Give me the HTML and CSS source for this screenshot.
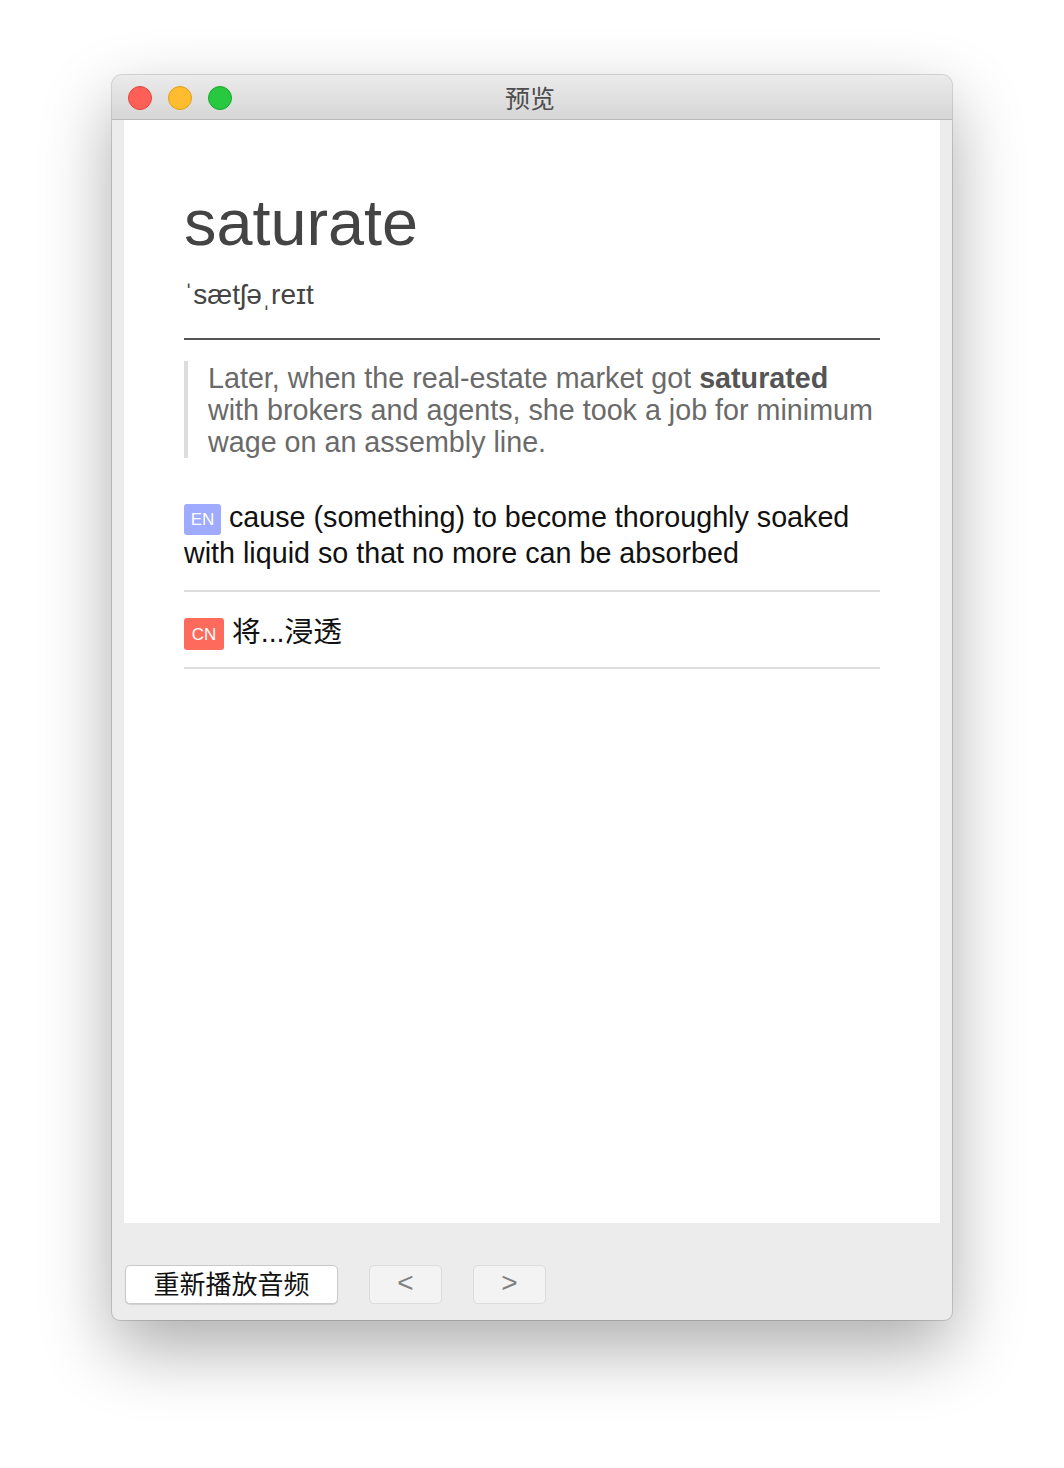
FILE: index.html
```html
<!DOCTYPE html>
<html lang="zh">
<head>
<meta charset="utf-8">
<title>预览</title>
<link rel="stylesheet" href="styles.css">
</head>
<body>
<div class="window">
  <div class="titlebar">
    <div class="lights">
      <span class="light red"></span>
      <span class="light yellow"></span>
      <span class="light green"></span>
    </div>
    <div class="title">预览</div>
  </div>
  <div class="main">
    <div class="content">
      <h1 class="word">saturate</h1>
      <div class="phonetic">ˈsætʃəˌreɪt</div>
      <hr class="rule-dark">
      <blockquote class="example">Later, when the real-estate market got <b>saturated</b> with brokers and agents, she took a job for minimum wage on an assembly line.</blockquote>
      <div class="def def-en"><span class="badge badge-en">EN</span> <span class="def-text">cause (something) to become thoroughly soaked with liquid so that no more can be absorbed</span></div>
      <hr class="rule-light">
      <div class="def def-cn"><span class="badge badge-cn">CN</span> <span class="def-text">将...浸透</span></div>
      <hr class="rule-light">
    </div>
    <div class="footer">
      <button class="btn btn-primary">重新播放音频</button>
      <button class="btn btn-nav">&lt;</button>
      <button class="btn btn-nav">&gt;</button>
    </div>
  </div>
</div>
</body>
</html>
```

FILE: styles.css
```css
html, body {
  margin: 0;
  padding: 0;
  background: #ffffff;
}
body {
  padding: 75px 112px 0 112px;
  height: 1468px;
  box-sizing: border-box;
  font-family: "Liberation Sans", Arial, "Noto Sans CJK SC", sans-serif;
}
.window {
  width: 840px;
  height: 1245px;
  border-radius: 10px 10px 8px 8px;
  background: #ececec;
  box-shadow: 0 28px 70px rgba(0,0,0,0.33), 0 0 0 1px rgba(0,0,0,0.14);
  display: flex;
  flex-direction: column;
  overflow: hidden;
}
.titlebar {
  height: 44px;
  border-bottom: 1px solid #b9b9b9;
  background: linear-gradient(#ebebeb, #d6d6d6);
  position: relative;
  display: flex;
  align-items: center;
  justify-content: center;
}
.lights {
  position: absolute;
  left: 16px;
  top: 11px;
  display: flex;
  gap: 16px;
}
.light {
  width: 24px;
  height: 24px;
  border-radius: 50%;
  box-sizing: border-box;
}
.red { background: #fe5f57; border: 1px solid #e2463f; }
.yellow { background: #febc2e; border: 1px solid #e1a116; }
.green { background: #28c840; border: 1px solid #15a92a; }
.title {
  font-family: "Noto Sans CJK SC", sans-serif;
  font-size: 25px;
  color: #4d4d4d;
  line-height: 44px;
  margin-left: -4px;
}
.main {
  flex: 1;
  display: flex;
  flex-direction: column;
  padding: 0 12px;
}
.content {
  height: 1103px;
  background: #ffffff;
  padding: 71px 60px 0 60px;
  box-sizing: border-box;
}
.word {
  margin: 0;
  font-size: 64.8px;
  line-height: 64px;
  font-weight: normal;
  color: #444444;
}
.phonetic {
  margin-top: 22px;
  font-size: 28px;
  line-height: 36px;
  color: #444444;
}
.rule-dark {
  margin: 25px 0 0 0;
  border: none;
  height: 2px;
  background: #555555;
}
.example {
  margin: 21px 0 0 0;
  padding: 1px 0 0 20px;
  border-left: 4px solid #dddddd;
  font-size: 28.7px;
  line-height: 32px;
  color: #6a6a6a;
}
.example b {
  color: #555555;
}
.def {
  font-size: 28.7px;
  line-height: 36px;
  color: #111111;
}
.def-en {
  margin-top: 41px;
}
.def-cn {
  margin-top: 22px;
  font-family: "Liberation Sans", "Noto Sans CJK SC", sans-serif;
}
.badge {
  display: inline-block;
  vertical-align: middle;
  font-family: "Liberation Sans", Arial, sans-serif;
  color: #ffffff;
  border-radius: 3px;
  text-align: center;
  font-size: 17px;
}
.badge-en {
  background: #9eabff;
  width: 37px;
  height: 31px;
  line-height: 32px;
}
.badge-cn {
  background: #fe6b5d;
  width: 40px;
  height: 32px;
  line-height: 33px;
}
.rule-light {
  margin: 19px 0 0 0;
  border: none;
  height: 2px;
  background: #dddddd;
}
.def-cn + .rule-light {
  margin-top: 17px;
}
.footer {
  flex: 1;
  display: flex;
  align-items: flex-start;
  padding-top: 42px;
  margin-left: 1px;
}
.btn {
  height: 39px;
  border-radius: 5px;
  box-sizing: border-box;
  padding: 0;
  cursor: default;
}
.btn-primary {
  width: 213px;
  background: #ffffff;
  border: 1px solid #c9c9c9;
  box-shadow: 0 1px 1px rgba(0,0,0,0.12);
  font-family: "Noto Sans CJK SC", sans-serif;
  font-size: 26px;
  line-height: 30px;
  padding-bottom: 4px;
  color: #111111;
}
.btn-nav {
  width: 73px;
  margin-left: 31px;
  background: #f3f3f3;
  border: 1px solid #dcdcdc;
  font-family: "Liberation Sans", Arial, sans-serif;
  font-size: 28px;
  line-height: 30px;
  padding-bottom: 3px;
  color: #808080;
}
```
